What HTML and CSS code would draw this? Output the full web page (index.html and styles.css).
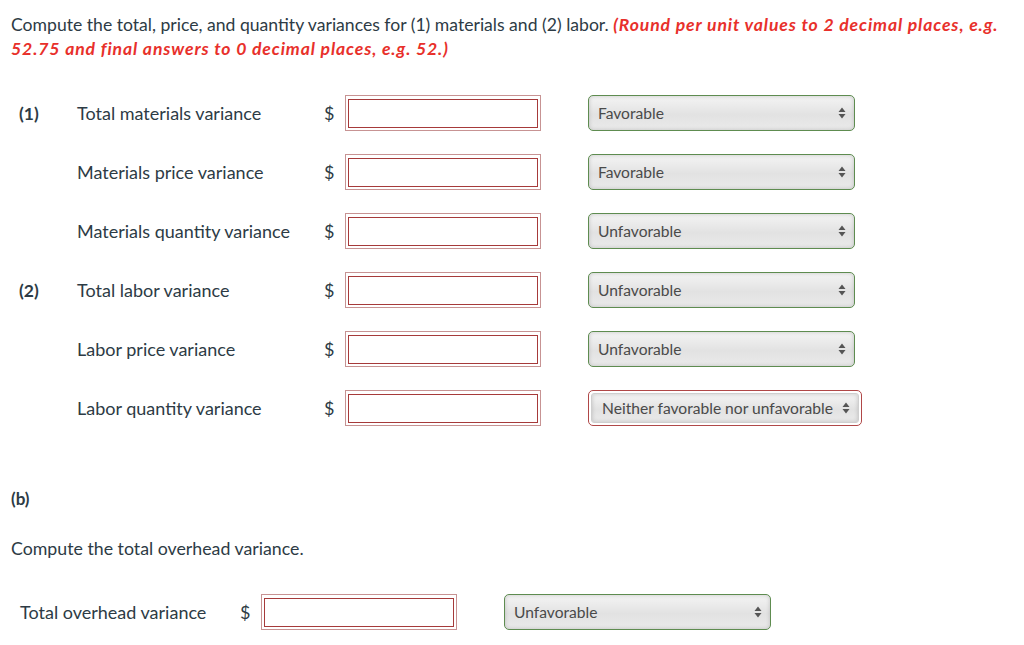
FILE: index.html
```html
<!DOCTYPE html>
<html>
<head>
<meta charset="utf-8">
<link rel="stylesheet" href="styles.css">
</head>
<body>
<div class="page">
  <p class="intro">Compute the total, price, and quantity variances for (1) materials and (2) labor. <em class="hint">(Round per unit values to 2 decimal places, e.g. 52.75 and final answers to 0 decimal places, e.g. 52.)</em></p>

  <div class="rows">
    <div class="row">
      <span class="num">(1)</span>
      <span class="label">Total materials variance</span>
      <span class="dollar">$</span>
      <span class="field"><span class="field-inner"></span></span>
      <span class="select"><span class="select-text">Favorable</span><svg class="arrows" width="8" height="12" viewBox="0 0 8 12"><path d="M4 0.5 L7.5 5 L0.5 5 Z M4 11.5 L7.5 7 L0.5 7 Z" fill="#555"/></svg></span>
    </div>
    <div class="row">
      <span class="num"></span>
      <span class="label">Materials price variance</span>
      <span class="dollar">$</span>
      <span class="field"><span class="field-inner"></span></span>
      <span class="select"><span class="select-text">Favorable</span><svg class="arrows" width="8" height="12" viewBox="0 0 8 12"><path d="M4 0.5 L7.5 5 L0.5 5 Z M4 11.5 L7.5 7 L0.5 7 Z" fill="#555"/></svg></span>
    </div>
    <div class="row">
      <span class="num"></span>
      <span class="label">Materials quantity variance</span>
      <span class="dollar">$</span>
      <span class="field"><span class="field-inner"></span></span>
      <span class="select"><span class="select-text">Unfavorable</span><svg class="arrows" width="8" height="12" viewBox="0 0 8 12"><path d="M4 0.5 L7.5 5 L0.5 5 Z M4 11.5 L7.5 7 L0.5 7 Z" fill="#555"/></svg></span>
    </div>
    <div class="row">
      <span class="num">(2)</span>
      <span class="label">Total labor variance</span>
      <span class="dollar">$</span>
      <span class="field"><span class="field-inner"></span></span>
      <span class="select"><span class="select-text">Unfavorable</span><svg class="arrows" width="8" height="12" viewBox="0 0 8 12"><path d="M4 0.5 L7.5 5 L0.5 5 Z M4 11.5 L7.5 7 L0.5 7 Z" fill="#555"/></svg></span>
    </div>
    <div class="row">
      <span class="num"></span>
      <span class="label">Labor price variance</span>
      <span class="dollar">$</span>
      <span class="field"><span class="field-inner"></span></span>
      <span class="select"><span class="select-text">Unfavorable</span><svg class="arrows" width="8" height="12" viewBox="0 0 8 12"><path d="M4 0.5 L7.5 5 L0.5 5 Z M4 11.5 L7.5 7 L0.5 7 Z" fill="#555"/></svg></span>
    </div>
    <div class="row">
      <span class="num"></span>
      <span class="label">Labor quantity variance</span>
      <span class="dollar">$</span>
      <span class="field"><span class="field-inner"></span></span>
      <span class="select-wrong"><span class="select select-in"><span class="select-text">Neither favorable nor unfavorable</span><svg class="arrows" width="8" height="12" viewBox="0 0 8 12"><path d="M4 0.5 L7.5 5 L0.5 5 Z M4 11.5 L7.5 7 L0.5 7 Z" fill="#555"/></svg></span></span>
    </div>
  </div>

  <p class="part">(b)</p>
  <p class="intro2">Compute the total overhead variance.</p>

  <div class="row row-b">
    <span class="label-b">Total overhead variance</span>
    <span class="dollar">$</span>
    <span class="field"><span class="field-inner"></span></span>
    <span class="select"><span class="select-text">Unfavorable</span><svg class="arrows" width="8" height="12" viewBox="0 0 8 12"><path d="M4 0.5 L7.5 5 L0.5 5 Z M4 11.5 L7.5 7 L0.5 7 Z" fill="#555"/></svg></span>
  </div>
</div>
</body>
</html>
```

FILE: styles.css
```css
html, body {
  margin: 0;
  padding: 0;
  background: #fff;
}
body {
  font-family: Lato, "Open Sans", sans-serif;
  color: #2d3b45;
}
.page {
  padding: 13px 11px 0 11px;
}
.intro {
  margin: 0;
  font-size: 17.6px;
  line-height: 24px;
}
.hint {
  color: #e8302b;
  font-weight: bold;
  font-style: italic;
  letter-spacing: 0.88px;
}
.rows {
  margin-top: 34px;
  display: flex;
  flex-direction: column;
  gap: 23px;
}
.row {
  display: flex;
  align-items: center;
  height: 36px;
}
.num {
  width: 58px;
  padding-left: 8px;
  font-weight: bold;
  font-size: 17.5px;
}
.label {
  width: 247px;
  font-size: 18px;
}
.dollar {
  width: 21px;
  font-size: 18px;
}
.field {
  display: flex;
  box-sizing: border-box;
  width: 196px;
  height: 36px;
  border: 1px solid #c79393;
  padding: 3px 2px 2px 2px;
}
.field-inner {
  flex: 1;
  border: 1px solid #a63a3a;
  background: #fff;
}
.select {
  margin-left: 47px;
  box-sizing: border-box;
  width: 267px;
  height: 36px;
  border: 1px solid #5e8c50;
  border-radius: 5px;
  background: linear-gradient(#f4f4f4, #e2e2e2 55%, #eaeaea);
  box-shadow: inset 0 0 4px rgba(0,0,0,0.18);
  display: flex;
  align-items: center;
  padding: 0 8px 0 9px;
  font-size: 15.6px;
  color: #4a4a4a;
}
.select-text {
  flex: 1;
}
.arrows {
  display: block;
}
.select-wrong {
  margin-left: 47px;
  box-sizing: border-box;
  width: 274px;
  height: 36px;
  border: 1px solid #b04848;
  border-radius: 5px;
  padding: 2px;
  display: flex;
}
.select-in {
  margin-left: 0;
  flex: 1;
  width: auto;
  height: auto;
  border: 1px solid #cfcfcf;
  border-radius: 3px;
  padding: 0 8px 0 10px;
}
.part {
  margin: 62px 0 0 0;
  font-weight: bold;
  font-size: 17px;
  line-height: 22px;
}
.intro2 {
  margin: 26px 0 0 0;
  font-size: 17.75px;
  line-height: 24px;
}
.row-b {
  margin-top: 34px;
  padding-left: 9px;
}
.label-b {
  width: 220px;
  font-size: 18px;
}
.row-b .select {
  margin-left: 47px;
}
```
